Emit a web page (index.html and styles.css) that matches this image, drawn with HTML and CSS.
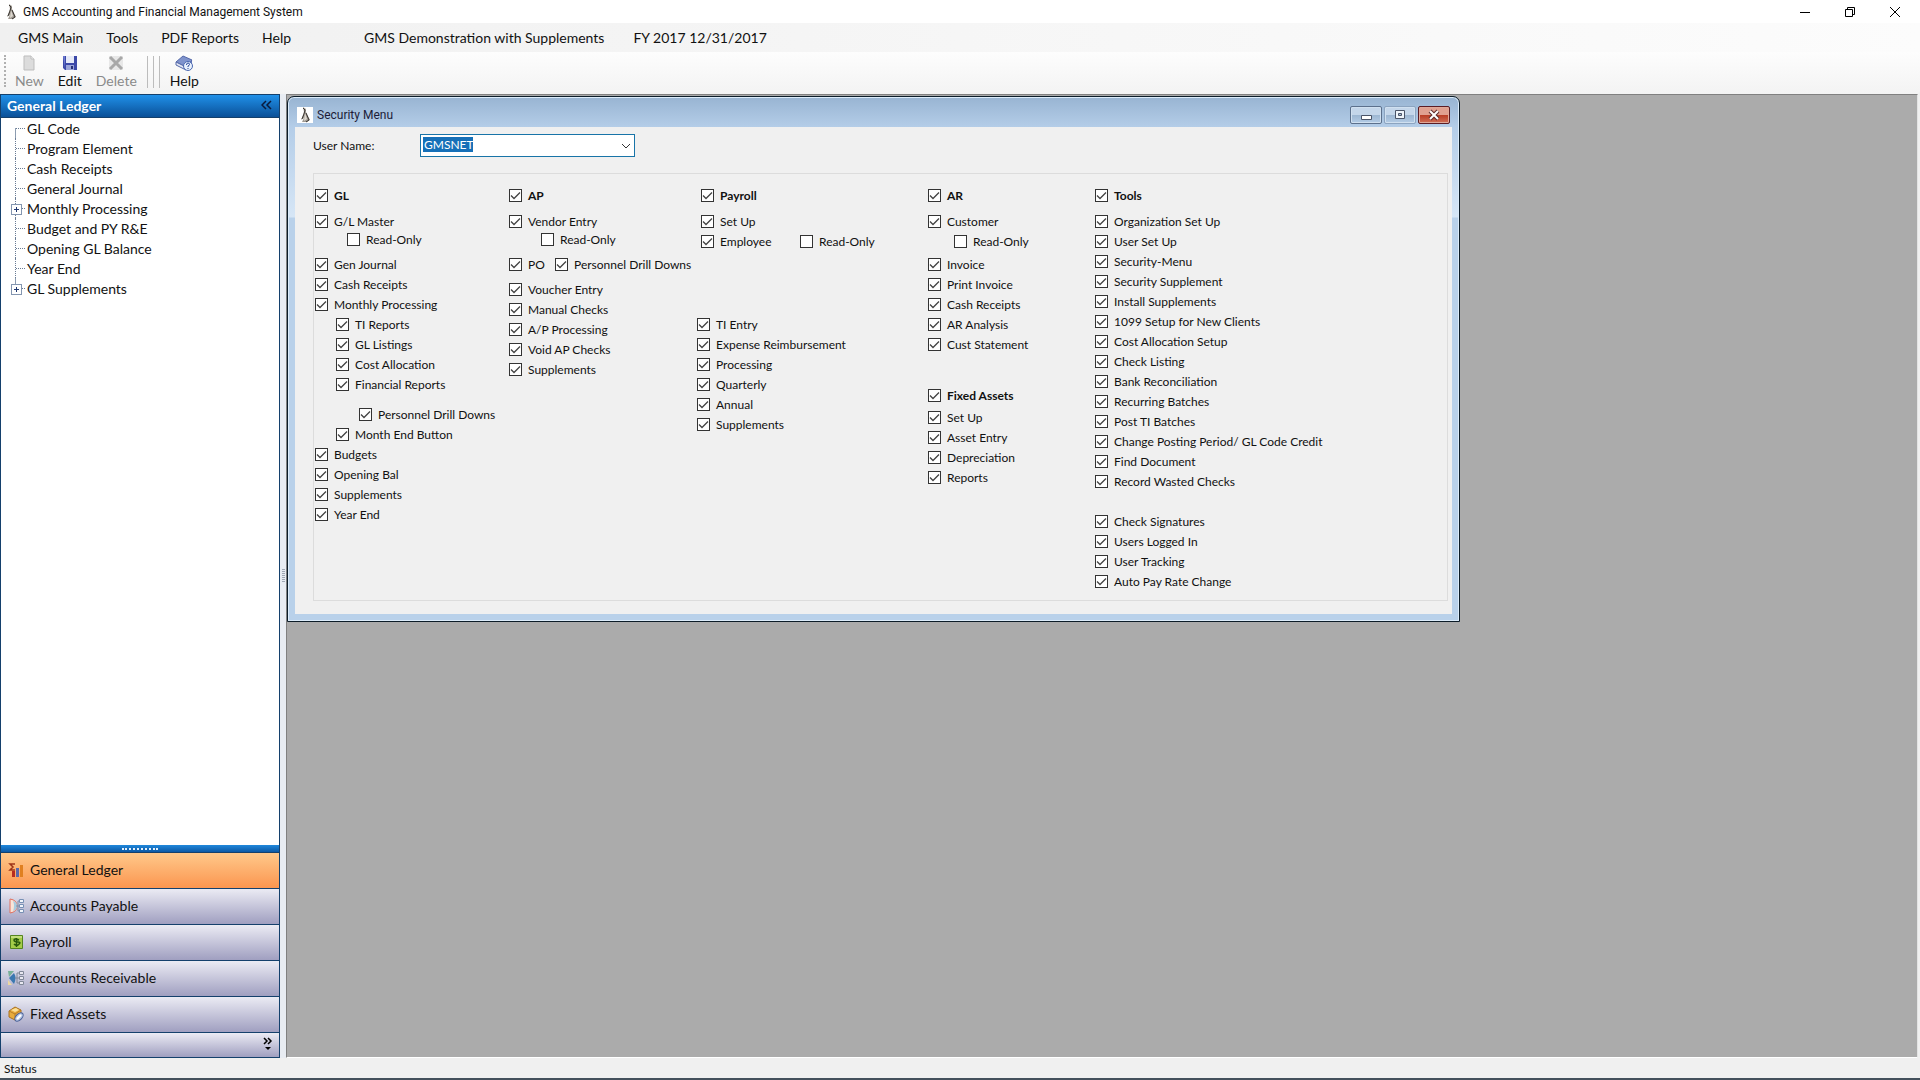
FILE: index.html
```html
<!DOCTYPE html>
<html lang="en">
<head>
    <meta charset="UTF-8">
    <meta name="viewport" content="width=device-width, initial-scale=1.0">
    <title>GMS Accounting and Financial Management System</title>
    <link rel="stylesheet" href="styles.css">
</head>
<body>
    <svg class="defs" width="0" height="0">
        <symbol id="logo" viewBox="0 0 16 16">
            <path d="M6 0l3 2 0 3 2 4 2 4-3 2-5 0 2-4-3 2 2-5 1-3z" fill="#a09a92"/>
            <path d="M6 1l2 2-1 4-2 5 M9 6l3 7-3 2" fill="none" stroke="#3a3632"/>
            <path d="M8 6l2 6-3 2z" fill="#ddd8d0"/>
        </symbol>
    </svg>

    <header class="titlebar">
        <svg class="logo"><use href="#logo"/></svg>
        <span class="title">GMS Accounting and Financial Management System</span>
        <div class="window-controls">
            <button aria-label="Minimize"><svg width="12" height="12"><path d="M1 6.500h10" stroke="#000"/></svg></button>
            <button aria-label="Restore"><svg width="12" height="12"><path d="M1.500 3.500h7v7h-7z M3.500 3.500v-2h7v7h-2" fill="none" stroke="#000"/></svg></button>
            <button aria-label="Close"><svg width="12" height="12"><path d="M1 1l10 10M11 1L1 11" stroke="#000"/></svg></button>
        </div>
    </header>

    <nav class="menubar">
        <button>GMS Main</button>
        <button>Tools</button>
        <button>PDF Reports</button>
        <button>Help</button>
        <span class="company">GMS Demonstration with Supplements</span>
        <span class="fiscal-year">FY 2017 12/31/2017</span>
    </nav>

    <div class="toolbar">
        <span class="grip"></span>
        <button disabled>
            <svg width="16" height="16"><path d="M3 1h7l3 3v11H3z" fill="#dcdcdc" stroke="#bdbdbd"/><path d="M10 1v3h3" fill="#f4f4f4" stroke="#bdbdbd"/></svg>
            New
        </button>
        <button>
            <svg width="16" height="16"><path d="M1 1h14v14H3l-2-2z" fill="#3c49a8"/><path d="M4 1h8v7H4z" fill="#e6eaf8"/><path d="M4 10h8v5H4z" fill="#9aa4d8"/><path d="M9 11h2v3H9z" fill="#262f74"/><path d="M1 1h2v12" fill="#6d7ad0"/></svg>
            Edit
        </button>
        <button disabled>
            <svg width="16" height="16"><path d="M1 1h14v14H1z" fill="#e8e8e8"/><path d="M2 2l12 12M14 2L2 14" stroke="#a8a8a8" stroke-width="3"/></svg>
            Delete
        </button>
        <span class="separators"></span>
        <button>
            <svg width="18" height="16"><path d="M1 7l7-6 9 4-6 7z" fill="#7f93cc" stroke="#5468a8"/><path d="M1 7v3l10 5v-3z" fill="#e4e8f4" stroke="#5468a8"/><path d="M11 12l6-7v4l-6 6z" fill="#5b70b4"/><circle cx="13" cy="11" r="4.500" fill="#e8f0fc" stroke="#4a68b0"/><path d="M11.500 10q0-2 1.500-2t1.500 1.500q0 1-1.500 1.500v1M13 13v1" fill="none" stroke="#2c4a9c"/></svg>
            Help
        </button>
    </div>

    <main>
        <aside>
            <h2>General Ledger
                <svg width="12" height="10"><path d="M5 1L1 5l4 4M10 1L6 5l4 4" fill="none" stroke="#0a1a3c" stroke-width="1.500"/></svg>
            </h2>
            <ul class="tree">
                <li>GL Code</li>
                <li>Program Element</li>
                <li>Cash Receipts</li>
                <li>General Journal</li>
                <li class="expandable">Monthly Processing</li>
                <li>Budget and PY R&amp;E</li>
                <li>Opening GL Balance</li>
                <li>Year End</li>
                <li class="expandable">GL Supplements</li>
            </ul>
            <div class="nav-splitter"><span></span></div>
            <nav class="modules">
                <button class="active">
                    <svg width="16" height="16"><path d="M7 2H2l3 3-3 3h5" fill="none" stroke="#a03418" stroke-width="1.500"/><path d="M4 9h3v6H4z" fill="#b82c20"/><path d="M8 6h3v9H8z" fill="#5c68a8"/><path d="M12 3h3v12h-3z" fill="#e08020"/></svg>
                    General Ledger
                </button>
                <button>
                    <svg width="16" height="16"><path d="M2 1q7 1 7 7t-7 7z" fill="#f8e4d8" stroke="#e07060"/><path d="M5 3q4 1 4 5t-4 5q2-5 0-10z" fill="#a8cce0"/><path d="M8 8h3M10 3v10M10 3h2M10 13h2" fill="none" stroke="#8090a8"/><path d="M11.500 1.500h4v3h-4zM11.500 6.500h4v3h-4zM11.500 11.500h4v3h-4z" fill="#f0f4fa" stroke="#7890b4"/></svg>
                    Accounts Payable
                </button>
                <button>
                    <svg width="16" height="16"><path d="M2.500 1.500h12v13h-12z" fill="#a4cc48" stroke="#548420"/><path d="M3 3h11" stroke="#e0f0b0"/><path d="M11 6q-5-2-5 0t4 2 0 3q-2 1-4-1M8.500 4v9" fill="none" stroke="#28580c" stroke-width="1.500"/></svg>
                    Payroll
                </button>
                <button>
                    <svg width="16" height="16"><path d="M0 1h6L1 7z" fill="#78b098"/><path d="M1 8l5-5q3 5 0 11z" fill="#3c78b0"/><path d="M0 10l4 5H0z" fill="#ecd8a0"/><path d="M7 8h4M9 3v10M9 3h3M9 13h3" fill="none" stroke="#808898"/><path d="M11.500 1.500h4v3h-4zM11.500 6.500h4v3h-4zM11.500 11.500h4v3h-4z" fill="#e8e8f0" stroke="#808898"/></svg>
                    Accounts Receivable
                </button>
                <button>
                    <svg width="16" height="16"><path d="M1 5l6-4 6 3v6l-6 4-6-3z" fill="#e8ac3c" stroke="#a87020"/><path d="M1 5l6 3 6-4M7 8v6" fill="none" stroke="#b87c24"/><path d="M3 4l5-2 3 2-4 2z" fill="#fce098"/><ellipse cx="11" cy="11" rx="5" ry="3" transform="rotate(-45 11 11)" fill="#b8c8e4" stroke="#486098"/><path d="M9 13l4-4" stroke="#fff" stroke-width="2"/></svg>
                    Fixed Assets
                </button>
                <button class="overflow" aria-label="Configure buttons">
                    <svg width="10" height="14"><path d="M1 1l3 3-3 3M5 1l3 3-3 3" fill="none" stroke="#000" stroke-width="1.500"/><path d="M2 10h6l-3 3z"/></svg>
                </button>
            </nav>
        </aside>
        <div class="splitter"><span></span></div>

        <div class="workspace">
            <section class="child-window">
                <div class="child-title">
                    <svg class="logo"><use href="#logo"/></svg>
                    <span>Security Menu</span>
                    <div class="child-controls">
                        <button aria-label="Minimize"><svg width="14" height="12"><path d="M2.500 6.500h10v4h-10z" fill="#fff" stroke="#4a5468"/></svg></button>
                        <button class="dim" aria-label="Maximize"><svg width="14" height="12"><path d="M2.500 1.500h9v8h-9z" fill="#eef4fa" stroke="#4a5468"/><path d="M5.500 4.500h3v2h-3z" fill="#a8bcd4" stroke="#4a5468"/></svg></button>
                        <button class="close" aria-label="Close"><svg width="14" height="12"><path d="M3 2l8 8M11 2l-8 8" stroke="#5c2c2c" stroke-width="4"/><path d="M3 2l8 8M11 2l-8 8" stroke="#fff" stroke-width="2"/></svg></button>
                    </div>
                </div>

                <form class="client">
                    <div class="user-row">
                        <label for="user-name">User Name:</label>
                        <div class="combo">
                            <select id="user-name"><option>GMSNET</option></select>
                            <svg width="10" height="6"><path d="M1 1l4 4 4-4" fill="none" stroke="#333"/></svg>
                        </div>
                    </div>

                    <div class="permissions">
                        <div class="column">
                            <label class="heading"><input type="checkbox" checked>GL</label>
                            <label><input type="checkbox" checked>G/L Master</label>
                            <label class="read-only"><input type="checkbox">Read-Only</label>
                            <label><input type="checkbox" checked>Gen Journal</label>
                            <label><input type="checkbox" checked>Cash Receipts</label>
                            <label><input type="checkbox" checked>Monthly Processing</label>
                            <div class="sub">
                                <label><input type="checkbox" checked>TI Reports</label>
                                <label><input type="checkbox" checked>GL Listings</label>
                                <label><input type="checkbox" checked>Cost Allocation</label>
                                <label><input type="checkbox" checked>Financial Reports</label>
                                <label class="drill-down"><input type="checkbox" checked>Personnel Drill Downs</label>
                                <label><input type="checkbox" checked>Month End Button</label>
                            </div>
                            <label><input type="checkbox" checked>Budgets</label>
                            <label><input type="checkbox" checked>Opening Bal</label>
                            <label><input type="checkbox" checked>Supplements</label>
                            <label><input type="checkbox" checked>Year End</label>
                        </div>

                        <div class="column">
                            <label class="heading"><input type="checkbox" checked>AP</label>
                            <label><input type="checkbox" checked>Vendor Entry</label>
                            <label class="read-only"><input type="checkbox">Read-Only</label>
                            <div class="pair po">
                                <label><input type="checkbox" checked>PO</label>
                                <label><input type="checkbox" checked>Personnel Drill Downs</label>
                            </div>
                            <label><input type="checkbox" checked>Voucher Entry</label>
                            <label><input type="checkbox" checked>Manual Checks</label>
                            <label><input type="checkbox" checked>A/P Processing</label>
                            <label><input type="checkbox" checked>Void AP Checks</label>
                            <label><input type="checkbox" checked>Supplements</label>
                        </div>

                        <div class="column">
                            <div class="payroll-setup">
                                <label class="heading"><input type="checkbox" checked>Payroll</label>
                                <label><input type="checkbox" checked>Set Up</label>
                                <div class="pair employee">
                                    <label><input type="checkbox" checked>Employee</label>
                                    <label><input type="checkbox">Read-Only</label>
                                </div>
                            </div>
                            <label><input type="checkbox" checked>TI Entry</label>
                            <label><input type="checkbox" checked>Expense Reimbursement</label>
                            <label><input type="checkbox" checked>Processing</label>
                            <label><input type="checkbox" checked>Quarterly</label>
                            <label><input type="checkbox" checked>Annual</label>
                            <label><input type="checkbox" checked>Supplements</label>
                        </div>

                        <div class="column">
                            <label class="heading"><input type="checkbox" checked>AR</label>
                            <label><input type="checkbox" checked>Customer</label>
                            <label class="customer-read-only"><input type="checkbox">Read-Only</label>
                            <label><input type="checkbox" checked>Invoice</label>
                            <label><input type="checkbox" checked>Print Invoice</label>
                            <label><input type="checkbox" checked>Cash Receipts</label>
                            <label><input type="checkbox" checked>AR Analysis</label>
                            <label><input type="checkbox" checked>Cust Statement</label>
                            <div class="fixed-assets">
                                <label class="heading"><input type="checkbox" checked>Fixed Assets</label>
                                <label><input type="checkbox" checked>Set Up</label>
                                <label><input type="checkbox" checked>Asset Entry</label>
                                <label><input type="checkbox" checked>Depreciation</label>
                                <label><input type="checkbox" checked>Reports</label>
                            </div>
                        </div>

                        <div class="column">
                            <label class="heading"><input type="checkbox" checked>Tools</label>
                            <label><input type="checkbox" checked>Organization Set Up</label>
                            <label><input type="checkbox" checked>User Set Up</label>
                            <label><input type="checkbox" checked>Security-Menu</label>
                            <label><input type="checkbox" checked>Security Supplement</label>
                            <label><input type="checkbox" checked>Install Supplements</label>
                            <label><input type="checkbox" checked>1099 Setup for New Clients</label>
                            <label><input type="checkbox" checked>Cost Allocation Setup</label>
                            <label><input type="checkbox" checked>Check Listing</label>
                            <label><input type="checkbox" checked>Bank Reconciliation</label>
                            <label><input type="checkbox" checked>Recurring Batches</label>
                            <label><input type="checkbox" checked>Post TI Batches</label>
                            <label><input type="checkbox" checked>Change Posting Period/ GL Code Credit</label>
                            <label><input type="checkbox" checked>Find Document</label>
                            <label><input type="checkbox" checked>Record Wasted Checks</label>
                            <div class="user-tools">
                                <label><input type="checkbox" checked>Check Signatures</label>
                                <label><input type="checkbox" checked>Users Logged In</label>
                                <label><input type="checkbox" checked>User Tracking</label>
                                <label><input type="checkbox" checked>Auto Pay Rate Change</label>
                            </div>
                        </div>
                    </div>
                </form>
            </section>
        </div>
    </main>

    <footer>Status</footer>
</body>
</html>
```

FILE: styles.css
```css
* {
    box-sizing: border-box;
}
body {
    margin: 0;
    height: 100vh;
    display: flex;
    flex-direction: column;
    overflow: hidden;
    background-color: #f0f0f0;
    font-family: Lato, "Liberation Sans", sans-serif;
    font-size: 14px;
    color: #111;
}
button {
    border: 0;
    padding: 0;
    background: none;
    font: inherit;
    color: inherit;
}
svg {
    display: block;
    flex: none;
}
.defs {
    position: absolute;
}
.logo {
    width: 16px;
    height: 16px;
    background-color: #fff;
}

/* main window title */
.titlebar {
    height: 23px;
    display: flex;
    align-items: center;
    gap: 4px;
    padding-left: 3px;
    background-color: #fff;
    font-family: Roboto, "Open Sans", sans-serif;
    font-size: 12px;
}
.window-controls {
    display: flex;
    margin-left: auto;
    padding-right: 3px;
}
.window-controls button {
    width: 45px;
    height: 20px;
    display: flex;
    align-items: center;
    justify-content: center;
}

/* menu and toolbar */
.menubar {
    height: 29px;
    display: flex;
    align-items: center;
    gap: 23px;
    padding-left: 18px;
    background: linear-gradient(to right, #f0f0f0, #fcfcfc);
}
.company {
    margin-left: 50px;
}
.fiscal-year {
    margin-left: 6px;
}
.toolbar {
    height: 42px;
    display: flex;
    align-items: flex-start;
    gap: 14px;
    padding: 3px 4px;
    border-radius: 0 0 4px 0;
    background: linear-gradient(#fdfdfd, #f3f3f3);
}
.toolbar button {
    display: flex;
    flex-direction: column;
    align-items: center;
    line-height: 20px;
}
.toolbar button:disabled {
    color: #8a8a8a;
}
.grip {
    width: 0;
    height: 32px;
    margin-right: -5px;
    border-left: 2px dotted #b0b0b0;
}
.separators {
    width: 13px;
    height: 32px;
    margin: 1px -4px 0;
    background: repeating-linear-gradient(to right, #bcbcbc 0 1px, transparent 1px 6px);
}

main {
    flex: 1;
    min-height: 0;
    display: flex;
}

/* left panel */
aside {
    width: 280px;
    display: flex;
    flex-direction: column;
    border: 1px solid #14406c;
}
h2 {
    height: 23px;
    margin: 0;
    padding: 0 6px 2px;
    display: flex;
    align-items: center;
    justify-content: space-between;
    border-bottom: 1px solid #14406c;
    background: linear-gradient(#2090e8, #0a5098);
    color: #fff;
    font-size: 14px;
}
.tree {
    flex: 1;
    margin: 0;
    padding: 0 0 0 14px;
    list-style: none;
    background-color: #fff;
}
.tree li {
    position: relative;
    height: 20px;
    padding-left: 11px;
    line-height: 21px;
    border-left: 1px dotted #6a7c94;
}
.tree li:first-child {
    border-image: linear-gradient(transparent 50%, #8c9cb0 50%) 1;
}
.tree li:last-child {
    border-image: linear-gradient(#8c9cb0 50%, transparent 50%) 1;
}
.tree li::before {
    content: "";
    position: absolute;
    left: 0;
    top: 10px;
    width: 9px;
    border-top: 1px dotted #6a7c94;
}
.tree .expandable::after {
    content: "";
    position: absolute;
    left: -5px;
    top: 6px;
    width: 9px;
    height: 9px;
    border: 1px solid #8496b0;
    background:
        linear-gradient(#203870, #203870) center / 5px 1px no-repeat,
        linear-gradient(#203870, #203870) center / 1px 5px no-repeat,
        #fff;
}
.nav-splitter {
    height: 8px;
    display: flex;
    align-items: center;
    justify-content: center;
    border-bottom: 1px solid #14406c;
    background: linear-gradient(#2088dc, #0c58a4);
}
.nav-splitter span {
    width: 36px;
    border-top: 2px dotted #e4f0fc;
}
.modules button {
    width: 100%;
    height: 36px;
    display: flex;
    align-items: center;
    gap: 6px;
    padding: 0 0 2px 7px;
    border-bottom: 1px solid #14406c;
    background: linear-gradient(#ebebf4, #a09fc0);
}
.modules .active {
    background: linear-gradient(#ffc88a, #fb9650);
}
.modules .overflow {
    height: 24px;
    justify-content: flex-end;
    padding-right: 6px;
    border-bottom: 0;
}
.splitter {
    width: 6px;
    display: flex;
    align-items: center;
    justify-content: center;
    background-color: #e8ecf2;
}
.splitter span {
    width: 3px;
    height: 14px;
    background: repeating-linear-gradient(#a0a8b4 0 1px, transparent 1px 2px);
}

/* MDI area */
.workspace {
    flex: 1;
    position: relative;
    margin-right: 2px;
    border: 1px solid #808080;
    border-right-color: #e3e3e3;
    border-bottom-color: #fff;
    background-color: #ababab;
}
.child-window {
    position: absolute;
    left: 0;
    top: 1px;
    padding: 0 7px 7px;
    border: 1px solid #0c1c28;
    border-radius: 7px 7px 0 0;
    background: linear-gradient(#98b4d2, #b4cde8 30px, #d6e6f6 120px, #b9d1ea 121px);
    box-shadow: inset 0 0 0 1px #dcecfa;
}
.child-title {
    height: 30px;
    display: flex;
    align-items: center;
    gap: 4px;
    padding: 6px 2px 0;
    font-family: Roboto, "Open Sans", sans-serif;
    font-size: 12px;
    color: #201c38;
}
.child-controls {
    display: flex;
    gap: 2px;
    margin-left: auto;
    align-self: flex-start;
    padding-top: 3px;
}
.child-controls button {
    width: 32px;
    height: 18px;
    display: flex;
    align-items: center;
    justify-content: center;
    border: 1px solid #5c708c;
    border-radius: 2px;
    background: linear-gradient(#c4d6ea 50%, #9cb6d2 50%, #b4cce6);
    box-shadow: inset 0 0 0 1px #d0e0f0;
}
.child-controls .dim {
    border-color: #8ca4c0;
}
.child-controls .close {
    border-color: #5c1c24;
    background: linear-gradient(#e0a090 50%, #b83c24 50%, #d07058);
    box-shadow: inset 0 0 0 1px #e0a898;
}
.client {
    padding: 7px 4px 13px 18px;
    background-color: #f0f0f0;
    font-size: 12px;
}
.user-row {
    display: flex;
    align-items: center;
    margin-bottom: 16px;
}
.user-row label {
    width: 107px;
}
.combo {
    position: relative;
}
.combo select {
    display: block;
    width: 215px;
    height: 23px;
    padding: 0 3px 2px;
    appearance: none;
    border: 1px solid #1874a8;
    border-radius: 0;
    background: linear-gradient(#1670b8, #1670b8) 2px 2px / 50px 15px no-repeat #fff;
    color: #fff;
    font: inherit;
}
.combo option {
    color: #111;
}
.combo svg {
    position: absolute;
    right: 4px;
    top: 9px;
    pointer-events: none;
}

/* permission check boxes */
.permissions {
    display: grid;
    grid-template-columns: 194px 188px 231px 167px 352px;
    padding: 11px 0 9px 1px;
    border: 1px solid #dcdcdc;
}
.column label {
    display: flex;
    align-items: center;
    gap: 6px;
    height: 20px;
    white-space: nowrap;
}
.column .heading {
    margin-bottom: 6px;
    font-weight: bold;
}
input[type="checkbox"] {
    flex: none;
    width: 13px;
    height: 13px;
    margin: 0;
    appearance: none;
    border: 1px solid #333;
    background-color: #fff;
}
input[type="checkbox"]:checked {
    background-image: url("data:image/svg+xml,%3Csvg xmlns='http://www.w3.org/2000/svg' viewBox='0 0 11 11'%3E%3Cpath d='M1 5.500l3 3 6-6' fill='none' stroke='%23444' stroke-width='1.300'/%3E%3C/svg%3E");
}
.column .read-only {
    height: 16px;
    margin: 0 0 7px 32px;
}
.sub {
    padding-left: 21px;
}
.column .drill-down {
    margin: 10px 0 0 23px;
}
.pair {
    display: flex;
}
.po {
    margin-bottom: 5px;
}
.po label:first-child {
    width: 46px;
}
.employee label:first-child {
    width: 99px;
}
.payroll-setup {
    padding-left: 4px;
    margin-bottom: 63px;
}
.column .customer-read-only {
    margin: 0 0 3px 26px;
}
.fixed-assets {
    margin-top: 31px;
}
.fixed-assets .heading {
    margin-bottom: 2px;
}
.user-tools {
    margin-top: 20px;
}

footer {
    height: 22px;
    padding-left: 4px;
    border-bottom: 2px solid #44505c;
    font-size: 12px;
    line-height: 22px;
}
```
